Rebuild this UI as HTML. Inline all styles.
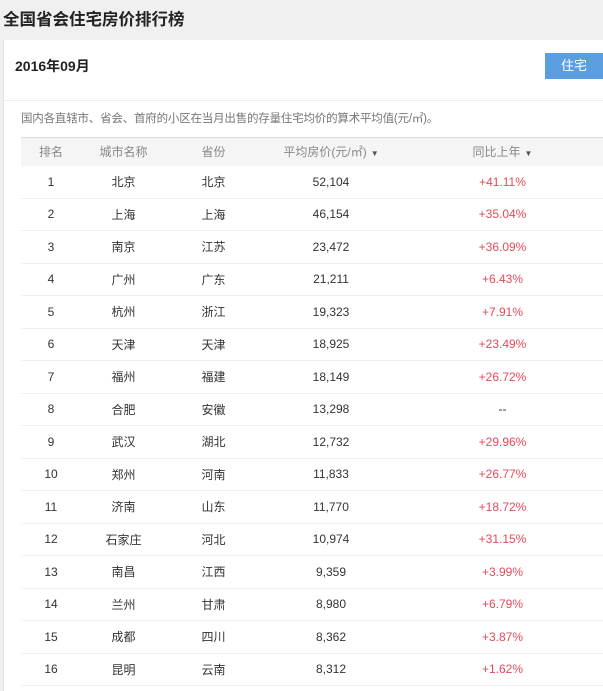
<!DOCTYPE html>
<html><head><meta charset="utf-8"><style>
*{margin:0;padding:0;box-sizing:border-box}
body{width:603px;height:691px;background:#f0f0f0;font-family:"Liberation Sans","Noto Sans CJK SC",sans-serif;overflow:hidden;position:relative}
.title{position:absolute;left:3px;top:6px;font-size:16.5px;font-weight:bold;color:#222}
.card{position:absolute;left:3px;top:40px;width:600px;height:651px;background:#fff;border-left:1px solid #e4e4e4}
.date{position:absolute;left:11px;top:16px;font-size:14px;font-weight:bold;color:#222}
.btn{position:absolute;left:541px;top:13px;width:58px;height:26px;background:#5b9ee0;color:#fff;font-size:13px;text-align:center;line-height:26px}
.sep{position:absolute;left:0;top:60px;width:600px;border-top:1px solid #eee}
.desc{position:absolute;left:17px;top:70px;font-size:11.5px;color:#777;letter-spacing:-0.2px}
table{position:absolute;left:17px;top:97px;width:583px;border-collapse:collapse;font-size:12px}
th{height:28px;background:#f5f5f5;color:#888;font-weight:normal;border-top:1px solid #ddd;text-align:center}
td{height:32.5px;text-align:center;color:#333;border-bottom:1px solid #f0f0f0}
td.r{color:#e64a5a}
.c1{width:60px}.c2{width:85px}.c3{width:95px}.c4{width:140px}
.ar{font-size:8px;margin-left:4px;color:#555}
</style></head><body>
<div class="title">全国省会住宅房价排行榜</div>
<div class="card">
<div class="date">2016年09月</div>
<div class="btn">住宅</div>
<div class="sep"></div>
<div class="desc">国内各直辖市、省会、首府的小区在当月出售的存量住宅均价的算术平均值(元/㎡)。</div>
<table>
<tr><th class="c1">排名</th><th class="c2">城市名称</th><th class="c3">省份</th><th class="c4">平均房价(元/㎡)<span class="ar">▼</span></th><th>同比上年<span class="ar">▼</span></th></tr>
<tr><td>1</td><td>北京</td><td>北京</td><td>52,104</td><td class="r">+41.11%</td></tr>
<tr><td>2</td><td>上海</td><td>上海</td><td>46,154</td><td class="r">+35.04%</td></tr>
<tr><td>3</td><td>南京</td><td>江苏</td><td>23,472</td><td class="r">+36.09%</td></tr>
<tr><td>4</td><td>广州</td><td>广东</td><td>21,211</td><td class="r">+6.43%</td></tr>
<tr><td>5</td><td>杭州</td><td>浙江</td><td>19,323</td><td class="r">+7.91%</td></tr>
<tr><td>6</td><td>天津</td><td>天津</td><td>18,925</td><td class="r">+23.49%</td></tr>
<tr><td>7</td><td>福州</td><td>福建</td><td>18,149</td><td class="r">+26.72%</td></tr>
<tr><td>8</td><td>合肥</td><td>安徽</td><td>13,298</td><td>--</td></tr>
<tr><td>9</td><td>武汉</td><td>湖北</td><td>12,732</td><td class="r">+29.96%</td></tr>
<tr><td>10</td><td>郑州</td><td>河南</td><td>11,833</td><td class="r">+26.77%</td></tr>
<tr><td>11</td><td>济南</td><td>山东</td><td>11,770</td><td class="r">+18.72%</td></tr>
<tr><td>12</td><td>石家庄</td><td>河北</td><td>10,974</td><td class="r">+31.15%</td></tr>
<tr><td>13</td><td>南昌</td><td>江西</td><td>9,359</td><td class="r">+3.99%</td></tr>
<tr><td>14</td><td>兰州</td><td>甘肃</td><td>8,980</td><td class="r">+6.79%</td></tr>
<tr><td>15</td><td>成都</td><td>四川</td><td>8,362</td><td class="r">+3.87%</td></tr>
<tr><td>16</td><td>昆明</td><td>云南</td><td>8,312</td><td class="r">+1.62%</td></tr>
</table>
</div>
</body></html>
